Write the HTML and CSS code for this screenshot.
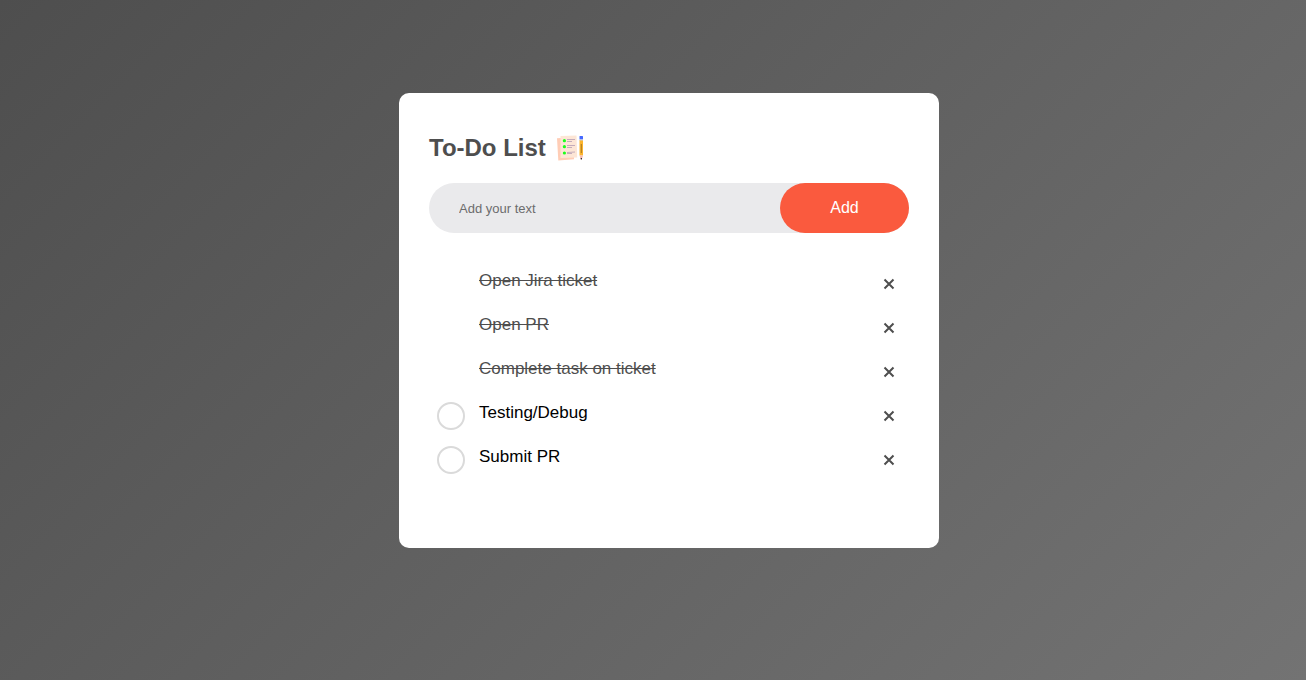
FILE: index.html
```html
<!DOCTYPE html>
<html lang="en">
<head>
<meta charset="utf-8">
<meta name="viewport" content="width=device-width, initial-scale=1">
<title>To-Do List</title>
<link rel="stylesheet" href="styles.css">
</head>
<body>
<main class="todo-app">
  <h1 class="title">To-Do List
    <svg class="title-icon" viewBox="0 0 30 30" aria-hidden="true">
      <path d="M1 5.300 L5 5 V24 L18 24 V26.300 L2.300 27.500 Z" fill="#ffcdb6"/>
      <path d="M4.500 3 L20.500 2.500 L21.200 24.500 L4.500 25 Z" fill="#fde6d6"/>
      <g fill="#1cff1c"><circle cx="8.400" cy="7.700" r="1.600"/><circle cx="8.400" cy="13.700" r="1.600"/><circle cx="8.400" cy="20" r="1.600"/></g>
      <g stroke="#b59db4" stroke-width="0.800"><path d="M11 6.500h8M11 12.500h8M11 19.500l8-.5"/><path d="M11 8.500h5M11 14.500h5M11 20.500h5"/></g>
      <path d="M23.500 7h3.500v15.500h-3.500z" fill="#fcb42c"/>
      <path d="M25.300 11v9" stroke="#a87824"/>
      <rect x="23.500" y="3" width="3.500" height="3.600" rx="0.500" fill="#4468ff"/>
      <path d="M23.500 7h3.500" stroke="#c6cbd8"/>
      <path d="M23.500 22.500h3.500l-1.200 4h-1z" fill="#f6b9ae"/>
      <circle cx="25.300" cy="25.800" r="0.700" fill="#111"/>
    </svg>
  </h1>
  <form class="entry" onsubmit="return false">
    <input class="entry-input" type="text" placeholder="Add your text" aria-label="New task">
    <button class="entry-button" type="submit">Add</button>
  </form>
  <ul class="tasks">
    <li class="task"><input class="check" type="checkbox" id="t1" checked><label class="label" for="t1">Open Jira ticket</label><button class="remove" type="button" aria-label="Remove Open Jira ticket"><svg class="cross" viewBox="0 0 12 12"><path d="M1.500 1.500l9 9M10.500 1.500l-9 9"/></svg></button></li>
    <li class="task"><input class="check" type="checkbox" id="t2" checked><label class="label" for="t2">Open PR</label><button class="remove" type="button" aria-label="Remove Open PR"><svg class="cross" viewBox="0 0 12 12"><path d="M1.500 1.500l9 9M10.500 1.500l-9 9"/></svg></button></li>
    <li class="task"><input class="check" type="checkbox" id="t3" checked><label class="label" for="t3">Complete task on ticket</label><button class="remove" type="button" aria-label="Remove Complete task on ticket"><svg class="cross" viewBox="0 0 12 12"><path d="M1.500 1.500l9 9M10.500 1.500l-9 9"/></svg></button></li>
    <li class="task"><input class="check" type="checkbox" id="t4"><label class="label" for="t4">Testing/Debug</label><button class="remove" type="button" aria-label="Remove Testing/Debug"><svg class="cross" viewBox="0 0 12 12"><path d="M1.500 1.500l9 9M10.500 1.500l-9 9"/></svg></button></li>
    <li class="task"><input class="check" type="checkbox" id="t5"><label class="label" for="t5">Submit PR</label><button class="remove" type="button" aria-label="Remove Submit PR"><svg class="cross" viewBox="0 0 12 12"><path d="M1.500 1.500l9 9M10.500 1.500l-9 9"/></svg></button></li>
  </ul>
</main>
</body>
</html>
```
FILE: styles.css
```css
* {
  box-sizing: border-box;
  margin: 0;
  padding: 0;
}

body {
  min-height: 100vh;
  padding: 93px 0 40px 32px;
  font-family: "Liberation Sans", Arial, sans-serif;
  background: linear-gradient(135deg, #4e4e4e, #737373);
}

.todo-app {
  max-width: 540px;
  margin: 0 auto;
  padding: 40px 30px 70px;
  background: #fff;
  border-radius: 10px;
}

.title {
  display: flex;
  align-items: center;
  gap: 10px;
  margin-bottom: 20px;
  font-size: 24px;
  line-height: 30px;
  color: #4e4e4e;
}

.title-icon {
  width: 30px;
  height: 30px;
}

.entry {
  display: flex;
  height: 50px;
  margin-bottom: 25px;
  background: #eaeaec;
  border-radius: 30px;
}

.entry-input {
  flex: 1;
  min-width: 0;
  padding: 0 30px;
  border: 0;
  outline: 0;
  background: transparent;
  font: 13px "Liberation Sans", Arial, sans-serif;
}

.entry-input::placeholder {
  color: #6c6c6c;
}

.entry-button {
  min-width: 129px;
  border: 0;
  border-radius: 30px;
  background: #fa5a3e;
  color: #fff;
  font: 16px "Liberation Sans", Arial, sans-serif;
  cursor: pointer;
}

.tasks {
  list-style: none;
}

.task {
  display: flex;
  align-items: flex-start;
  height: 44px;
  padding-left: 8px;
}

.check {
  appearance: none;
  flex: none;
  width: 28px;
  height: 28px;
  margin: 12px 14px 0 0;
  border: 2px solid #dadada;
  border-radius: 50%;
}

.check:checked {
  border-color: transparent;
}

.label {
  flex: 1;
  padding: 12px 0 10px;
  font-size: 17px;
  line-height: 22px;
  color: #000;
}

.check:checked + .label {
  color: #4e4e4e;
  text-decoration: line-through;
}

.remove {
  display: grid;
  place-items: center;
  width: 41px;
  height: 40px;
  margin-top: 6px;
  border: 0;
  background: none;
  cursor: pointer;
}

.cross {
  width: 12px;
  height: 12px;
  fill: none;
  stroke: #4e4e4e;
  stroke-width: 2;
}
```
